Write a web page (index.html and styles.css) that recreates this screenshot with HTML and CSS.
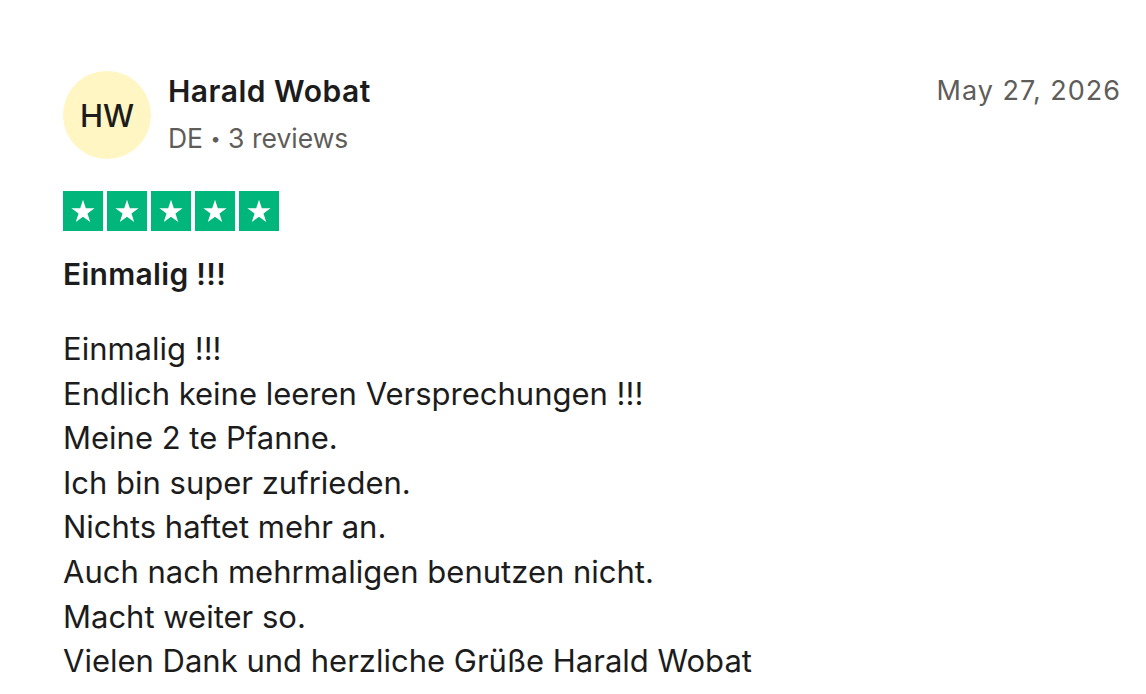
FILE: index.html
```html
<!DOCTYPE html>
<html lang="de">
<head>
    <meta charset="UTF-8">
    <meta name="viewport" content="width=device-width, initial-scale=1.0">
    <title>Bewertung</title>
    <link rel="stylesheet" href="styles.css">
</head>
<body>
    <article class="review">
        <header class="review-header">
            <div class="consumer">
                <div class="avatar">HW</div>
                <div class="consumer-info">
                    <div class="consumer-name">Harald Wobat</div>
                    <div class="consumer-meta">DE <span class="dot">•</span> 3 reviews</div>
                </div>
            </div>
            <time class="review-date">May 27, 2026</time>
        </header>

        <div class="stars">
            <span class="star"><svg viewBox="0 0 24 24"><path d="M12 3.6l2.1 6.3h6.6l-5.35 3.9 2.05 6.4L12 16.3l-5.4 3.9 2.05-6.4L3.3 9.9h6.6z"/></svg></span>
            <span class="star"><svg viewBox="0 0 24 24"><path d="M12 3.6l2.1 6.3h6.6l-5.35 3.9 2.05 6.4L12 16.3l-5.4 3.9 2.05-6.4L3.3 9.9h6.6z"/></svg></span>
            <span class="star"><svg viewBox="0 0 24 24"><path d="M12 3.6l2.1 6.3h6.6l-5.35 3.9 2.05 6.4L12 16.3l-5.4 3.9 2.05-6.4L3.3 9.9h6.6z"/></svg></span>
            <span class="star"><svg viewBox="0 0 24 24"><path d="M12 3.6l2.1 6.3h6.6l-5.35 3.9 2.05 6.4L12 16.3l-5.4 3.9 2.05-6.4L3.3 9.9h6.6z"/></svg></span>
            <span class="star"><svg viewBox="0 0 24 24"><path d="M12 3.6l2.1 6.3h6.6l-5.35 3.9 2.05 6.4L12 16.3l-5.4 3.9 2.05-6.4L3.3 9.9h6.6z"/></svg></span>
        </div>

        <h2 class="review-title">Einmalig !!!</h2>

        <p class="review-text">Einmalig !!!<br>
Endlich keine leeren Versprechungen !!!<br>
Meine 2 te Pfanne.<br>
Ich bin super zufrieden.<br>
Nichts haftet mehr an.<br>
Auch nach mehrmaligen benutzen nicht.<br>
Macht weiter so.<br>
Vielen Dank und herzliche Grüße Harald Wobat</p>
    </article>
</body>
</html>
```

FILE: styles.css
```css
body {
    margin: 0;
    background: #ffffff;
    color: #1c1c1c;
    font-family: Inter, "Noto Sans", sans-serif;
}

.review {
    padding: 71px 25px 0 63px;
}

.review-header {
    display: flex;
    justify-content: space-between;
    align-items: flex-start;
}

.consumer {
    display: flex;
    align-items: center;
    gap: 17px;
}

.avatar {
    width: 88px;
    height: 88px;
    border-radius: 50%;
    background: #fff6c4;
    display: flex;
    align-items: center;
    justify-content: center;
    font-size: 31px;
    font-weight: 500;
    color: #1c1c1c;
}

.consumer-info {
    display: flex;
    flex-direction: column;
    gap: 7px;
}

.consumer-name {
    font-size: 30px;
    font-weight: 600;
    letter-spacing: 0.5px;
    line-height: 40px;
}

.consumer-meta {
    font-size: 26.5px;
    line-height: 40px;
    color: #5f5d59;
}

.dot {
    font-size: 18px;
    vertical-align: 3px;
}

.review-date {
    font-size: 27px;
    letter-spacing: 1px;
    line-height: 40px;
    color: #5f5d59;
}

.stars {
    display: flex;
    gap: 4px;
    margin-top: 32px;
}

.star {
    width: 40px;
    height: 40px;
    background: #00b67a;
    display: flex;
    align-items: center;
    justify-content: center;
}

.star svg {
    width: 32px;
    height: 32px;
    fill: #ffffff;
}

.review-title {
    margin: 24px 0 0;
    font-size: 30px;
    font-weight: 600;
    letter-spacing: 0.3px;
    line-height: 38px;
}

.review-text {
    margin: 34px 0 0;
    font-size: 31px;
    line-height: 44.6px;
}
```
